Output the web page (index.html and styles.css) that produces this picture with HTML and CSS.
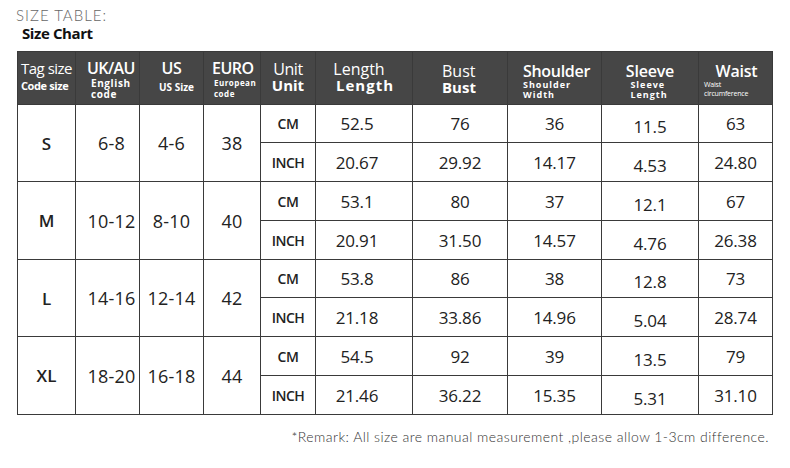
FILE: index.html
```html
<!DOCTYPE html>
<html>
<head>
<meta charset="utf-8">
<link rel="stylesheet" href="styles.css">
</head>
<body>
<div class="page">
  <div class="title">SIZE TABLE:</div>
  <div class="subtitle">Size Chart</div>
  <div class="chart">
    <div class="hc h-tag"><span class="hm">Tag size</span><span class="hs s-code">Code size</span></div>
    <div class="hc h-uk"><span class="hm">UK/AU</span><span class="hs s-eng">English<br>code</span></div>
    <div class="hc h-us"><span class="hm">US</span><span class="hs s-us">US Size</span></div>
    <div class="hc h-eu"><span class="hm">EURO</span><span class="hs s-eu">European<br>code</span></div>
    <div class="hc h-unit"><span class="hm">Unit</span><span class="hb">Unit</span></div>
    <div class="hc h-len"><span class="hm">Length</span><span class="hb hb-len">Length</span></div>
    <div class="hc h-bust"><span class="hm">Bust</span><span class="hb">Bust</span></div>
    <div class="hc h-sh"><span class="hm">Shoulder</span><span class="hs s-sh">Shoulder<br>Width</span></div>
    <div class="hc h-sl"><span class="hm">Sleeve</span><span class="hs s-sl">Sleeve<br>Length</span></div>
    <div class="hc h-wa"><span class="hm">Waist</span><span class="hs s-wa">Waist<br>circumference</span></div>

    <div class="c sz span2">S</div><div class="c num span2 uk">6-8</div><div class="c num span2">4-6</div><div class="c num span2">38</div>
    <div class="c unit">CM</div><div class="c v len">52.5</div><div class="c v">76</div><div class="c v">36</div><div class="c v sl">11.5</div><div class="c v wa">63</div>
    <div class="c unit">INCH</div><div class="c v len">20.67</div><div class="c v">29.92</div><div class="c v">14.17</div><div class="c v sl">4.53</div><div class="c v wa">24.80</div>

    <div class="c sz span2">M</div><div class="c num span2 uk">10-12</div><div class="c num span2">8-10</div><div class="c num span2">40</div>
    <div class="c unit">CM</div><div class="c v len">53.1</div><div class="c v">80</div><div class="c v">37</div><div class="c v sl">12.1</div><div class="c v wa">67</div>
    <div class="c unit">INCH</div><div class="c v len">20.91</div><div class="c v">31.50</div><div class="c v">14.57</div><div class="c v sl">4.76</div><div class="c v wa">26.38</div>

    <div class="c sz span2">L</div><div class="c num span2 uk">14-16</div><div class="c num span2">12-14</div><div class="c num span2">42</div>
    <div class="c unit">CM</div><div class="c v len">53.8</div><div class="c v">86</div><div class="c v">38</div><div class="c v sl">12.8</div><div class="c v wa">73</div>
    <div class="c unit">INCH</div><div class="c v len">21.18</div><div class="c v">33.86</div><div class="c v">14.96</div><div class="c v sl">5.04</div><div class="c v wa">28.74</div>

    <div class="c sz span2">XL</div><div class="c num span2 uk">18-20</div><div class="c num span2">16-18</div><div class="c num span2">44</div>
    <div class="c unit">CM</div><div class="c v len">54.5</div><div class="c v">92</div><div class="c v">39</div><div class="c v sl">13.5</div><div class="c v wa">79</div>
    <div class="c unit">INCH</div><div class="c v len">21.46</div><div class="c v">36.22</div><div class="c v">15.35</div><div class="c v sl">5.31</div><div class="c v wa">31.10</div>
  </div>
  <div class="remark">*Remark: All size are manual measurement ,please allow 1-3cm difference.</div>
</div>
</body>
</html>
```

FILE: styles.css
```css
* { box-sizing: border-box; }
html, body { margin: 0; padding: 0; background: #fff; }
body { width: 790px; height: 468px; overflow: hidden; }

.page { padding-top: 6px; }

.title {
  font-family: "Lato", "Liberation Sans", sans-serif;
  font-weight: 300;
  font-size: 15px;
  line-height: 18px;
  letter-spacing: 1px;
  color: #666;
  padding-left: 16px;
}

.subtitle {
  font-family: "Open Sans", "Liberation Sans", sans-serif;
  font-weight: 700;
  font-size: 15px;
  line-height: 18px;
  color: #111;
  padding-left: 22px;
  letter-spacing: -0.4px;
}

.chart {
  margin: 9px 0 0 17px;
  display: grid;
  width: max-content;
  grid-template-columns: 57px 63px 63px 56px 54px 96px 94px 93px 96px 73px;
  grid-template-rows: 52px 37px 38px 38px 38px 37px 38px 38px 38px;
  gap: 1px;
  padding: 1px;
  background: #3a3a3a;
  font-family: "Open Sans", "Liberation Sans", sans-serif;
}

/* header */
.hc {
  background: #464646;
  color: #fff;
  padding-top: 8px;
  display: flex;
  flex-direction: column;
  white-space: nowrap;
}
.hm { display: block; font-size: 16px; line-height: 16px; font-weight: 600; letter-spacing: -0.4px; white-space: nowrap; }
.hs { display: block; font-size: 10px; line-height: 11px; font-weight: 700; }
.hb { display: block; font-size: 15px; line-height: 15px; font-weight: 700; margin-top: 1px; }

.h-tag { padding-left: 3px; }
.h-tag .hm { font-size: 15px; letter-spacing: -0.5px; font-weight: 500; }
.s-code { font-size: 11px; letter-spacing: -0.4px; margin-top: 4px; }

.h-uk { padding-left: 11px; }
.h-uk .hm { letter-spacing: -0.6px; }
.s-eng { padding-left: 4px; letter-spacing: 0.6px; margin-top: 2px; }

.h-us { align-items: center; }
.s-us { padding-left: 10px; margin-top: 6px; }

.h-eu { padding-left: 8px; }
.h-eu .hm { letter-spacing: -0.5px; }
.s-eu { font-size: 8px; line-height: 11px; letter-spacing: 0.5px; padding-left: 2px; margin-top: 1px; }

.h-unit { align-items: center; padding-top: 9px; }
.h-unit .hm { font-weight: 500; }
.h-len { align-items: center; padding-top: 9px; }
.h-len .hm { margin-right: 10px; letter-spacing: 0; font-weight: 500; }
.hb-len { letter-spacing: 1px; margin-left: 2px; }

.h-bust { padding-left: 29px; padding-top: 11px; }
.h-bust .hm { letter-spacing: 0; font-weight: 500; }

.h-sh { padding-left: 15px; padding-top: 11px; }
.h-sh .hm { letter-spacing: -0.3px; }
.s-sh { font-size: 9px; letter-spacing: 1px; margin-top: 1px; line-height: 10px; }

.h-sl { align-items: center; padding-top: 11px; }
.h-sl .hm { letter-spacing: -0.2px; }
.s-sl { font-size: 9px; letter-spacing: 1px; line-height: 10px; text-align: left; padding-right: 2px; margin-top: 1px; }

.h-wa { padding-top: 11px; }
.h-wa .hm { align-self: center; padding-left: 2px; letter-spacing: -0.2px; }
.s-wa { font-size: 7px; line-height: 9px; font-weight: 500; padding-left: 5px; letter-spacing: -0.2px; margin-top: 1px; }

/* body cells */
.c {
  background: #fff;
  color: #222;
  display: flex;
  align-items: center;
  justify-content: center;
}
.span2 { grid-row: span 2; }
.sz { font-size: 17px; font-weight: 600; }
.num { font-size: 18px; font-weight: 500; letter-spacing: 0.2px; }
.uk { padding-left: 8px; }
.unit { font-size: 14px; font-weight: 600; letter-spacing: -0.5px; }
.v { font-size: 17px; font-weight: 400; letter-spacing: -0.2px; }
.len { padding-right: 14px; }
.sl { padding-top: 6px; }

.remark {
  font-family: "Lato", "Liberation Sans", sans-serif;
  font-weight: 300;
  font-size: 14px;
  line-height: 16px;
  color: #333;
  text-align: right;
  padding-right: 21px;
  margin-top: 14px;
  letter-spacing: 0.45px;
}
```
